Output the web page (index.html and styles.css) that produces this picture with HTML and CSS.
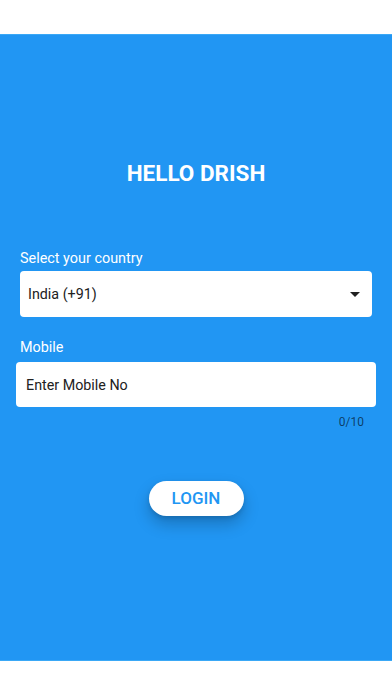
FILE: index.html
```html
<!DOCTYPE html>
<html lang="en">
<head>
<meta charset="utf-8">
<title>Hello Drish</title>
<link rel="stylesheet" href="styles.css">
</head>
<body>
<div class="screen">
  <div class="top-bar"></div>
  <main class="main">
    <h1 class="title">HELLO DRISH</h1>
    <label class="field-label label-country">Select your country</label>
    <div class="select">
      <span class="select-value">India (+91)</span>
      <svg class="select-arrow" width="10" height="5" viewBox="0 0 10 5"><path d="M0 0H10L5 5Z" fill="#212121"/></svg>
    </div>
    <label class="field-label label-mobile">Mobile</label>
    <div class="input"><span class="input-placeholder">Enter Mobile No</span></div>
    <div class="counter">0/10</div>
    <button class="login-btn">LOGIN</button>
  </main>
  <div class="bottom-bar"></div>
</div>
</body>
</html>
```
FILE: styles.css
```css
html, body {
  margin: 0;
  padding: 0;
  background: #ffffff;
}
body {
  font-family: Roboto, "Liberation Sans", sans-serif;
}
.screen {
  width: 392px;
  height: 696px;
  display: flex;
  flex-direction: column;
}
.top-bar {
  height: 34px;
  background: #ffffff;
}
.bottom-bar {
  height: 35px;
  background: #ffffff;
}
.main {
  flex: 1;
  background: #2196f3;
  border-top: 1px solid #3aa8f6;
  border-bottom: 1px solid #3aa8f6;
  display: flex;
  flex-direction: column;
  padding-top: 125px;
  box-sizing: border-box;
}
.title {
  margin: 0;
  font-size: 22.5px;
  line-height: 26px;
  font-weight: 700;
  color: #ffffff;
  text-align: center;
}
.field-label {
  display: block;
  margin-left: 20px;
  font-size: 14.4px;
  line-height: 18px;
  color: #ffffff;
}
.label-country {
  margin-top: 64px;
}
.select {
  margin: 3px 20px 0 20px;
  height: 46px;
  background: #ffffff;
  border-radius: 4px;
  display: flex;
  align-items: center;
  justify-content: space-between;
  padding: 0 12px 0 8px;
}
.select-value,
.input-placeholder {
  font-size: 14.3px;
  color: #212121;
}
.select-arrow {
  display: block;
}
.label-mobile {
  margin-top: 22px;
}
.input {
  margin: 5px 16px 0 16px;
  height: 45px;
  background: #ffffff;
  border-radius: 4px;
  display: flex;
  align-items: center;
  padding-left: 10px;
}
.counter {
  margin-top: 8px;
  padding-right: 28px;
  text-align: right;
  font-size: 12px;
  line-height: 14px;
  color: rgba(0, 0, 0, 0.6);
}
.login-btn {
  align-self: center;
  margin-top: 52px;
  width: 95px;
  height: 35px;
  border: none;
  border-radius: 18px;
  background: #ffffff;
  color: #2196f3;
  font-family: Roboto, "Liberation Sans", sans-serif;
  font-size: 17px;
  font-weight: 500;
  line-height: 35px;
  padding: 0;
  box-shadow: 0 8px 16px rgba(0, 0, 0, 0.22), 0 2px 4px rgba(0, 0, 0, 0.12);
}
```
